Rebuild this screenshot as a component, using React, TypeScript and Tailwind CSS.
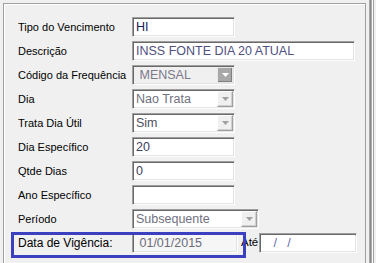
type FieldProps = {
  value?: string;
  width: string;
  color?: string;
  bg?: string;
  combo?: "dark" | "light";
};

function Field({ value = "", width, color = "text-[#3a3a6a]", bg = "bg-white", combo }: FieldProps) {
  return (
    <div
      className={`${width} ${bg} h-[20px] flex items-center border border-t-[#a0a0a0] border-l-[#a0a0a0] border-r-white border-b-white shadow-[inset_1px_1px_0_#696969,inset_-1px_-1px_0_#e3e3e3]`}
    >
      <span className={`flex-1 pl-[3px] pt-[1px] text-[12.5px] leading-none whitespace-pre ${color}`}>{value}</span>
      {combo === "dark" && (
        <div className="mr-[1px] h-[16px] w-[16px] bg-[#a8a8a8] border border-[#e8e8e8] shadow-[inset_-1px_-1px_0_#808080] flex items-center justify-center">
          <svg width="7" height="4" viewBox="0 0 7 4">
            <path d="M0 0h7L3.5 4z" fill="#ffffff" />
          </svg>
        </div>
      )}
      {combo === "light" && (
        <div className="mr-[1px] h-[16px] w-[16px] bg-[#f0f0f0] border border-t-white border-l-white border-r-[#a0a0a0] border-b-[#a0a0a0] shadow-[inset_-1px_-1px_0_#d0d0d0] flex items-center justify-center">
          <svg width="7" height="4" viewBox="0 0 7 4">
            <path d="M0 0h7L3.5 4z" fill="#a0a0a0" />
          </svg>
        </div>
      )}
    </div>
  );
}

function Row({ label, children, big }: { label: string; children: React.ReactNode; big?: boolean }) {
  return (
    <div className="flex items-center h-[20px]">
      <div className={`w-[114px] text-black leading-none ${big ? "text-[12px]" : "text-[11px]"}`}>{label}</div>
      {children}
    </div>
  );
}

export default function App() {
  return (
    <div
      className="relative w-[376px] h-[263px] overflow-hidden bg-[#f0f0f0] flex"
      style={{ fontFamily: '"Liberation Sans", Arial, sans-serif' }}
    >
      <div className="ml-[3px] mt-[3px] w-[363px] border-l border-t border-r border-[#a0a0a0] shadow-[inset_1px_1px_0_#ffffff]">
        <div className="pl-[14px] pt-[13px] flex flex-col gap-[4px]">
          <Row label="Tipo do Vencimento">
            <Field value="HI" width="w-[103px]" color="text-[#202058]" />
          </Row>
          <Row label="Descrição">
            <Field value="INSS FONTE DIA 20 ATUAL" width="w-[223px]" color="text-[#505080]" />
          </Row>
          <Row label="Código da Frequência">
            <Field value=" MENSAL" width="w-[103px]" color="text-[#7a7a8a]" bg="bg-[#f0f0f0]" combo="dark" />
          </Row>
          <Row label="Dia">
            <Field value="Nao Trata" width="w-[103px]" color="text-[#707080]" combo="light" />
          </Row>
          <Row label="Trata Dia Útil">
            <Field value="Sim" width="w-[103px]" color="text-[#505060]" combo="light" />
          </Row>
          <Row label="Dia Específico">
            <Field value="20" width="w-[103px]" color="text-[#404060]" />
          </Row>
          <Row label="Qtde Dias">
            <Field value="0" width="w-[103px]" color="text-[#404060]" />
          </Row>
          <Row label="Ano Específico">
            <Field value="" width="w-[103px]" />
          </Row>
          <Row label="Período">
            <Field value="Subsequente" width="w-[127px]" color="text-[#707080]" combo="light" />
          </Row>
          <Row label="Data de Vigência:" big>
            <Field value=" 01/01/2015" width="w-[106px]" color="text-[#6a6a7a]" bg="bg-[#f6f6f6]" />
            <span className="ml-[3px] w-[18px] text-[11.5px] text-black leading-none">Até</span>
            <Field value="   /   /" width="w-[98px]" color="text-[#5a6aa8]" />
          </Row>
        </div>
      </div>
      <div className="ml-[3px] w-[3px] h-full bg-[#8a8a8a] border-x border-[#a8a8a8]" />
      <div className="w-[1px] h-full bg-white" />
      <div className="w-[1px] h-full bg-[#a0a0a0]" />
      <div className="absolute left-[11px] top-[232px] w-[235px] h-[26px] border-[3px] border-[#3b40c0]" />
    </div>
  );
}
